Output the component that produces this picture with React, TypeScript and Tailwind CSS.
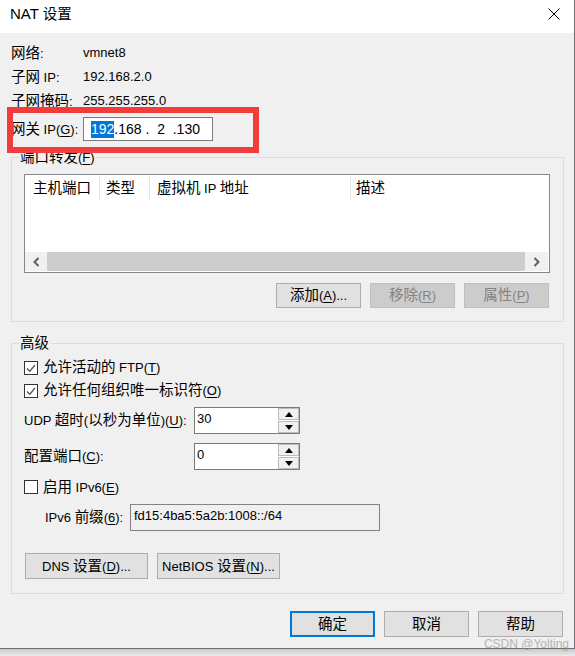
import React from "react";

function T({ s }: { s: string }) {
  const runs: { t: string; c: boolean; u: boolean }[] = [];
  for (let i = 0; i < s.length; i++) {
    let ch = s[i];
    let u = false;
    if (ch === "&" && i + 1 < s.length) {
      u = true;
      i++;
      ch = s[i];
    }
    const c = /[\u2e80-\u9fff\uff00-\uffef]/.test(ch);
    const last = runs[runs.length - 1];
    if (last && last.c === c && last.u === u) last.t += ch;
    else runs.push({ t: ch, c, u });
  }
  return (
    <span className="whitespace-pre">
      {runs.map((r, i) => (
        <span
          key={i}
          className={`${r.c ? "text-[14.5px]" : ""} ${r.u ? "underline underline-offset-[2px] decoration-[1px]" : ""}`}
        >
          {r.t}
        </span>
      ))}
    </span>
  );
}

function Btn({ s, w, disabled, primary }: { s: string; w: string; disabled?: boolean; primary?: boolean }) {
  const base = "h-full flex items-center justify-center leading-[16px]";
  let cls = "bg-[#e1e1e1] border border-[#adadad] text-black";
  if (disabled) cls = "bg-[#cccccc] border border-[#bfbfbf] text-[#838383]";
  if (primary) cls = "bg-[#e1e1e1] border-2 border-[#0078d7] text-black";
  return (
    <div className={`${base} ${cls}`} style={{ width: w }}>
      <T s={s} />
    </div>
  );
}

function Check({ checked, label }: { checked?: boolean; label: string }) {
  return (
    <div className="flex items-center">
      <div className="w-[14px] h-[14px] border border-[#333333] bg-white flex items-center justify-center">
        {checked && (
          <svg width="12" height="12" viewBox="0 0 12 12">
            <polyline points="2,6.5 4.8,9.2 10,3" fill="none" stroke="#555555" strokeWidth="1.3" />
          </svg>
        )}
      </div>
      <div className="ml-[5px] leading-[16px]">
        <T s={label} />
      </div>
    </div>
  );
}

function Spinner({ v }: { v: string }) {
  return (
    <div className="flex w-[106px] h-[27px] border border-[#7a7a7a] bg-white">
      <div className="flex-1 pl-[2px] pt-[3px] leading-[16px] text-[13px]">{v}</div>
      <div className="flex flex-col w-[21px] gap-[1px]">
        <div className="flex-1 border border-[#bcbcbc] bg-[#f0f0f0] flex items-center justify-center">
          <svg width="8" height="5" viewBox="0 0 8 5">
            <polygon points="0,5 8,5 4,0" fill="#000" />
          </svg>
        </div>
        <div className="flex-1 border border-[#bcbcbc] bg-[#f0f0f0] flex items-center justify-center">
          <svg width="8" height="5" viewBox="0 0 8 5">
            <polygon points="0,0 8,0 4,5" fill="#000" />
          </svg>
        </div>
      </div>
    </div>
  );
}

export default function App() {
  return (
    <div
      className="w-[575px] h-[656px] bg-[#e6e6e6] text-[13px] leading-[16px] text-black overflow-hidden"
      style={{ fontFamily: '"Liberation Sans", "Noto Sans CJK SC", sans-serif' }}
    >
      <div className="relative w-[575px] h-[649px] border-r border-b border-[#6f6f6f] flex flex-col">
        {/* title bar */}
        <div className="h-[33px] bg-white flex items-start justify-between pl-[10px] pr-[14px]">
          <div className="mt-[6px] text-[15px] leading-[16px]">
            <T s="NAT 设置" />
          </div>
          <svg className="mt-[8px]" width="12" height="12" viewBox="0 0 12 12">
            <line x1="0.5" y1="0.5" x2="11.5" y2="11.5" stroke="#000" strokeWidth="1" />
            <line x1="11.5" y1="0.5" x2="0.5" y2="11.5" stroke="#000" strokeWidth="1" />
          </svg>
        </div>

        {/* body */}
        <div className="flex-1 bg-[#f0f0f0] flex flex-col">
          <div className="pl-[11px] pt-[8px]">
            <div className="flex h-[24px] items-center">
              <div className="w-[72px]"><T s="网络:" /></div>
              <div>vmnet8</div>
            </div>
            <div className="flex h-[24px] items-center">
              <div className="w-[72px]"><T s="子网 IP:" /></div>
              <div>192.168.2.0</div>
            </div>
            <div className="flex h-[24px] items-center">
              <div className="w-[72px]"><T s="子网掩码:" /></div>
              <div>255.255.255.0</div>
            </div>
            <div className="flex h-[24px] items-center mt-[4px]">
              <div className="w-[72px]"><T s="网关 IP(&G):" /></div>
              <div className="w-[130px] h-[24px] border border-[#7a7a7a] bg-white flex items-center pl-[7px] text-[14px]">
                <span className="bg-[#0078d7] text-white leading-[17px]">192</span>
                <span className="whitespace-pre">.168 .  2  .130</span>
              </div>
            </div>
          </div>

          {/* port forwarding group */}
          <fieldset className="ml-[11px] mt-[8px] w-[553px] border border-[#dcdcdc] p-0">
            <legend className="ml-[7px] px-[1px] leading-[16px]">
              <T s="端口转发(&F)" />
            </legend>
            <div className="pt-[8px] pl-[12px] pb-[13px]">
              <div className="w-[526px] h-[99px] border border-[#828790] bg-white flex flex-col">
                <div className="h-[25px] flex items-stretch pt-[1px]">
                  <div className="w-[75px] pl-[8px] flex items-center border-r border-[#e5e5e5]"><T s="主机端口" /></div>
                  <div className="w-[50px] pl-[6px] flex items-center border-r border-[#e5e5e5]"><T s="类型" /></div>
                  <div className="w-[201px] pl-[7px] flex items-center border-r border-[#e5e5e5]"><T s="虚拟机 IP 地址" /></div>
                  <div className="flex-1 pl-[5px] flex items-center"><T s="描述" /></div>
                </div>
                <div className="flex-1" />
                <div className="h-[19px] mb-[1px] flex">
                  <div className="w-[22px] flex items-center justify-center bg-[#f0f0f0]">
                    <svg width="7" height="10" viewBox="0 0 7 10">
                      <polyline points="5.5,1 1.5,5 5.5,9" fill="none" stroke="#606060" strokeWidth="2" />
                    </svg>
                  </div>
                  <div className="flex-1 bg-[#cdcdcd]" />
                  <div className="w-[23px] flex items-center justify-center bg-[#f0f0f0]">
                    <svg width="7" height="10" viewBox="0 0 7 10">
                      <polyline points="1.5,1 5.5,5 1.5,9" fill="none" stroke="#606060" strokeWidth="2" />
                    </svg>
                  </div>
                  <div className="w-[1px] bg-white" />
                </div>
              </div>
              <div className="mt-[10px] w-[526px] pr-[1px] h-[25px] flex justify-end gap-[9px]">
                <Btn s="添加(&A)..." w="85px" />
                <Btn s="移除(&R)" w="85px" disabled />
                <Btn s="属性(&P)" w="85px" disabled />
              </div>
            </div>
          </fieldset>

          {/* advanced group */}
          <fieldset className="ml-[11px] mt-[13px] w-[553px] border border-[#dcdcdc] p-0">
            <legend className="ml-[7px] px-[1px] leading-[16px]">
              <T s="高级" />
            </legend>
            <div className="pl-[12px] pb-[14px] flex flex-col">
              <div className="mt-[4px] h-[23px] flex items-center">
                <Check checked label="允许活动的 FTP(&T)" />
              </div>
              <div className="h-[23px] flex items-center">
                <Check checked label="允许任何组织唯一标识符(&O)" />
              </div>
              <div className="mt-[5px] h-[27px] flex items-center">
                <div className="w-[170px]"><T s="UDP 超时(以秒为单位)(&U):" /></div>
                <Spinner v="30" />
              </div>
              <div className="mt-[9px] h-[27px] flex items-center">
                <div className="w-[170px]"><T s="配置端口(&C):" /></div>
                <Spinner v="0" />
              </div>
              <div className="mt-[6px] h-[22px] flex items-center">
                <Check label="启用 IPv6(&E)" />
              </div>
              <div className="mt-[6px] h-[27px] flex items-center pl-[21px]">
                <div className="w-[85px]"><T s="IPv6 前缀(&6):" /></div>
                <div className="w-[250px] h-[27px] border border-[#838383] bg-[#f0f0f0] pl-[3px] pt-[3px] leading-[16px]">
                  fd15:4ba5:5a2b:1008::/64
                </div>
              </div>
              <div className="mt-[22px] h-[26px] flex gap-[9px] pl-[1px]">
                <Btn s="DNS 设置(&D)..." w="123px" />
                <Btn s="NetBIOS 设置(&N)..." w="123px" />
              </div>
            </div>
          </fieldset>

          <div className="mt-[17px] h-[26px] flex justify-end gap-[9px] pr-[11px]">
            <Btn s="确定" w="85px" primary />
            <Btn s="取消" w="85px" />
            <Btn s="帮助" w="85px" />
          </div>
        </div>

        {/* red annotation box */}
        <div className="absolute left-[7px] top-[107px] w-[252px] h-[46px] border-[6px] border-[#f23c3c]" />

        {/* watermark */}
        <div className="absolute right-[5px] bottom-[-3px] text-[12px] leading-[14px] text-[#9a9a9a] opacity-70">
          CSDN @Yolting
        </div>
      </div>
      <div className="h-[7px] bg-gradient-to-b from-[#c8c8c8] to-[#ececec]" />
    </div>
  );
}
